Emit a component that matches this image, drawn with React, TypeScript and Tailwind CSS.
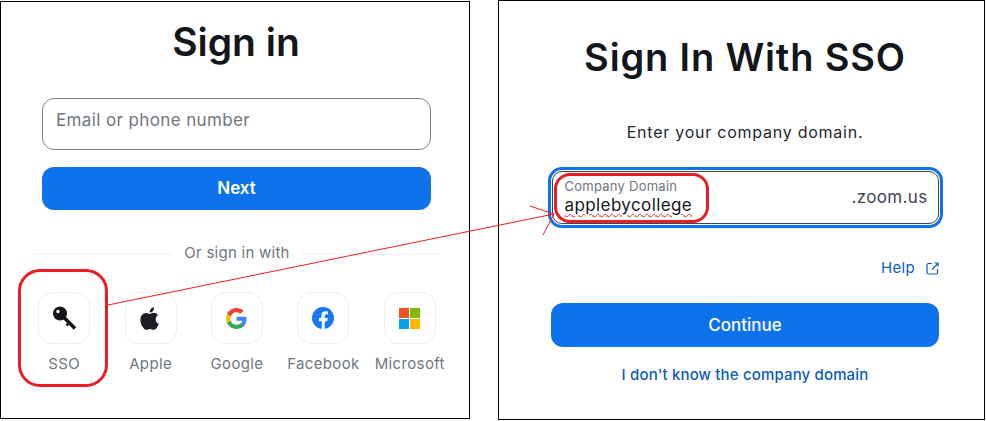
const font = { fontFamily: 'Inter, "Liberation Sans", sans-serif' };

function Tile({ label, children }: { label: string; children: React.ReactNode }) {
  return (
    <div className="flex flex-col items-center">
      <div className="flex h-[52px] w-[52px] items-center justify-center rounded-[14px] border border-[#eeeff2] bg-white">
        {children}
      </div>
      <div className="mt-[10px] whitespace-nowrap text-[15px] leading-[20px] tracking-[0.35px] text-[#6e7680]">{label}</div>
    </div>
  );
}

export default function App() {
  return (
    <div className="relative h-[421px] w-[986px] overflow-hidden bg-white" style={font}>
      <div className="flex items-start">
        <section className="mt-px flex h-[418px] w-[470px] shrink-0 flex-col border border-black bg-white">
          <h1 className="mt-[16px] pl-[2px] text-center text-[39px] font-semibold leading-[48px] text-[#13161b]">Sign in</h1>
          <div className="ml-[41px] mt-[32px] flex h-[52px] w-[389px] rounded-[12px] border border-[#7b828c] pl-[13px] pt-[9px] text-[17px] leading-[24px] tracking-[0.38px] text-[#6e7680]">
            Email or phone number
          </div>
          <div className="ml-[41px] mt-[17px] flex h-[43px] w-[389px] items-center justify-center rounded-[12px] bg-[#0e72ed] text-[17px] font-semibold text-white">
            Next
          </div>
          <div className="ml-[33px] mt-[32px] flex h-[24px] w-[406px] items-center">
            <div className="h-px flex-1 bg-[#eeeff2]" />
            <span className="px-[13px] pb-px text-[15px] tracking-[0.25px] text-[#6e7680]">Or sign in with</span>
            <div className="h-px flex-1 bg-[#eeeff2]" />
          </div>
          <div className="ml-[20px] mt-[26px] grid w-[432px] grid-cols-5">
            <Tile label="SSO">
              <svg width="24" height="24" viewBox="0 0 24 24">
                <circle cx="8" cy="7.500" r="7" fill="#13161b" />
                <path d="M12 11.500 L23 22.500" stroke="#13161b" strokeWidth="3.600" />
                <path d="M17 17 L14.500 19.500" stroke="#13161b" strokeWidth="2.500" />
                <circle cx="6" cy="5.500" r="1.700" fill="#fff" />
              </svg>
            </Tile>
            <Tile label="Apple">
              <svg width="27" height="27" viewBox="0 0 24 24" fill="#1d1d28">
                <path d="M16.600 12.700c0-2.500 2-3.700 2.100-3.800-1.200-1.700-3-1.900-3.600-1.900-1.500-.2-3 .9-3.800.9-.8 0-2-.9-3.300-.9-1.700 0-3.300 1-4.100 2.500-1.800 3.100-.5 7.600 1.200 10.100.9 1.200 1.900 2.600 3.200 2.500 1.300-.1 1.800-.8 3.300-.8 1.500 0 2 .8 3.300.8 1.400 0 2.300-1.200 3.100-2.500 1-1.400 1.400-2.800 1.400-2.900-.1 0-2.800-1-2.800-4z" />
                <path d="M14.200 5.300c.7-.8 1.100-2 1-3.200-1 0-2.200.7-2.900 1.500-.6.700-1.200 1.900-1 3.100 1.100.1 2.200-.6 2.900-1.400z" />
              </svg>
            </Tile>
            <Tile label="Google">
              <svg width="21" height="21" viewBox="0 0 24 24">
                <path fill="#4285F4" d="M23.500 12.300c0-.8-.1-1.600-.2-2.300H12v4.500h6.500c-.3 1.500-1.100 2.800-2.400 3.600v3h3.900c2.200-2.100 3.500-5.200 3.500-8.800z" />
                <path fill="#34A853" d="M12 24c3.200 0 6-1.100 8-2.900l-3.900-3c-1.100.7-2.500 1.200-4.100 1.200-3.100 0-5.800-2.100-6.700-5H1.300v3.100C3.300 21.300 7.300 24 12 24z" />
                <path fill="#FBBC05" d="M5.300 14.300c-.5-1.500-.5-3.100 0-4.600V6.600h-4c-1.700 3.300-1.700 7.500 0 10.800z" />
                <path fill="#EA4335" d="M12 4.800c1.800 0 3.300.6 4.600 1.800l3.400-3.400C17.900 1.200 15.200 0 12 0 7.300 0 3.300 2.700 1.300 6.600l4 3.100c.9-2.800 3.600-4.900 6.700-4.900z" />
              </svg>
            </Tile>
            <Tile label="Facebook">
              <svg width="22" height="22" viewBox="0 0 24 24">
                <circle cx="12" cy="12" r="12" fill="#1877f2" />
                <path fill="#fff" d="M16.700 15.500l.5-3.500h-3.300V9.800c0-1 .5-1.900 2-1.900h1.500v-3s-1.400-.2-2.700-.2c-2.700 0-4.500 1.600-4.500 4.600V12H7.600v3.500h3.100V24h3.200v-8.500z" />
              </svg>
            </Tile>
            <Tile label="Microsoft">
              <div className="grid h-[21px] w-[21px] grid-cols-2 gap-px">
                <div className="bg-[#f25022]" />
                <div className="bg-[#7fba00]" />
                <div className="bg-[#00a4ef]" />
                <div className="bg-[#ffb900]" />
              </div>
            </Tile>
          </div>
        </section>

        <section className="ml-[28px] flex h-[420px] w-[487px] shrink-0 flex-col items-center border border-black bg-white pl-[7px]">
          <h1 className="mt-[32px] text-center text-[38px] font-semibold leading-[48px] tracking-[0.85px] text-[#13161b]">Sign In With SSO</h1>
          <p className="mt-[39px] text-[16px] leading-[24px] tracking-[0.75px] text-[#23272e]">Enter your company domain.</p>
          <div className="mt-[23px] rounded-[14px] border-[3px] border-[#0e72ed] p-px">
            <div className="flex h-[53px] w-[387px] items-center justify-between rounded-[10px] border border-[#3f4650] pl-[12px] pr-[10px]">
              <div>
                <div className="text-[13px] leading-[15px] tracking-[0.25px] text-[#6e7680]">Company Domain</div>
                <div className="text-[17px] leading-[22px] tracking-[0.4px] text-[#13161b] underline decoration-[#d9232e] decoration-wavy decoration-1 underline-offset-2">
                  applebycollege
                </div>
              </div>
              <div className="text-[17px] tracking-[0.35px] text-[#3f4650]">.zoom.us</div>
            </div>
          </div>
          <div className="mt-[29px] flex w-[388px] items-center justify-end gap-[11px] text-[15px] leading-[22px] tracking-[0.3px] text-[#0b5cbc]">
            Help
            <svg width="13" height="13" viewBox="0 0 13 13" fill="none" stroke="#0b5cbc" strokeWidth="1.200">
              <path d="M6 1.500H2.500a1.500 1.500 0 0 0-1.500 1.500v7.500a1.500 1.500 0 0 0 1.500 1.500H10a1.500 1.500 0 0 0 1.500-1.500V7" />
              <path d="M6 7.500L12 1.500M8.500 1h3.500v3.500" />
            </svg>
          </div>
          <div className="mt-[24px] flex h-[44px] w-[388px] items-center justify-center rounded-[12px] bg-[#0e72ed] pt-px text-[17px] font-medium text-white">
            Continue
          </div>
          <div className="mt-[17px] text-[15px] font-medium leading-[22px] tracking-[0.15px] text-[#0b5cbc]">I don't know the company domain</div>
        </section>
      </div>

      <div className="absolute left-[18px] top-[269px] h-[118px] w-[90px] rounded-[22px] border-[3px] border-[#ed1c24]" />
      <div className="absolute left-[554px] top-[173px] h-[50px] w-[155px] rounded-[16px] border-[3px] border-[#ed1c24]" />
      <svg className="absolute left-0 top-0" width="986" height="421" fill="none" stroke="#ed1c24" strokeWidth="1">
        <path d="M108 305 L554 214" />
        <path d="M530 206 L554 214 L543 235" />
      </svg>
    </div>
  );
}
